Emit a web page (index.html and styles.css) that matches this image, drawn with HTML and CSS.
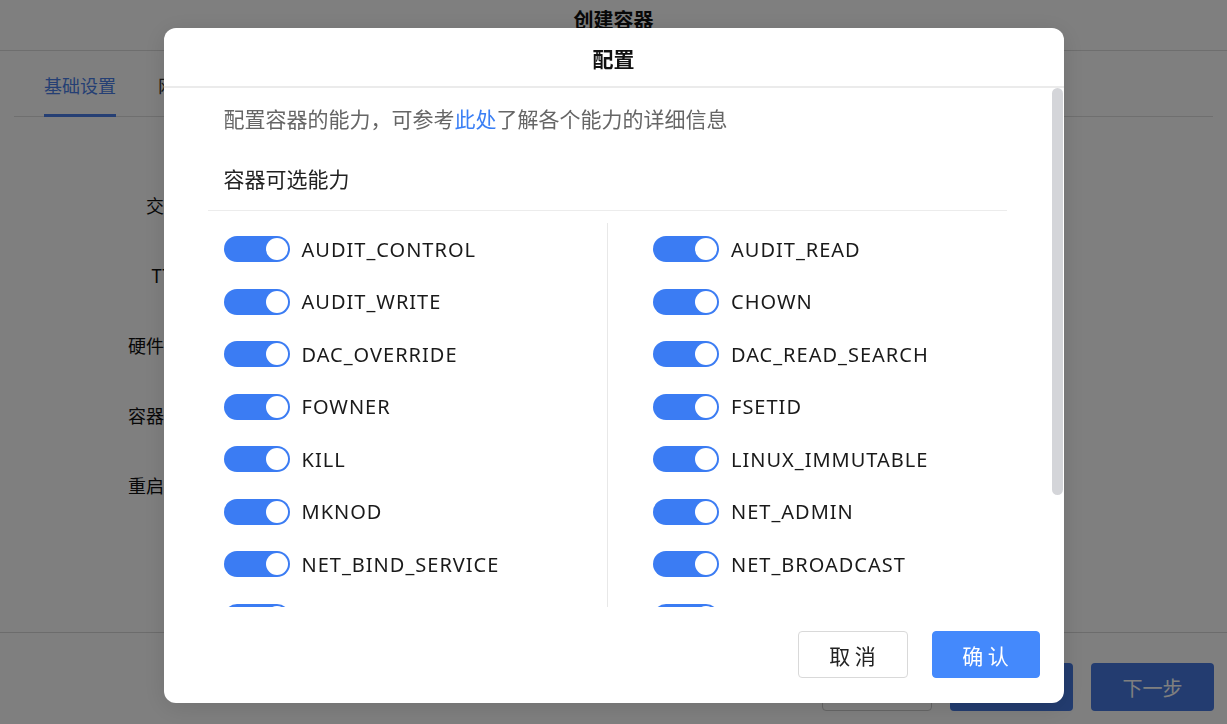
FILE: index.html
```html
<!DOCTYPE html>
<html lang="zh-CN">
<head>
<meta charset="utf-8">
<title>创建容器</title>
<link rel="stylesheet" href="styles.css">
</head>
<body>
<div class="page">
  <header class="page-head">创建容器</header>
  <nav class="tabs">
    <span class="tab active">基础设置</span>
    <span class="tab">网络设置</span>
    <span class="tab">存储设置</span>
  </nav>
  <div class="form">
    <div class="form-row"><span class="form-label">交互式</span></div>
    <div class="form-row"><span class="form-label">TTY：</span></div>
    <div class="form-row"><span class="form-label">硬件限制</span></div>
    <div class="form-row"><span class="form-label">容器能力</span></div>
    <div class="form-row"><span class="form-label">重启策略</span></div>
  </div>
  <footer class="page-foot">
    <button class="pbtn pbtn-outline">取消</button>
    <button class="pbtn pbtn-primary">上一步</button>
    <button class="pbtn pbtn-primary">下一步</button>
  </footer>
</div>

<div class="mask">
  <div class="modal">
    <div class="modal-head">配置</div>
    <div class="modal-body">
      <div class="body-inner">
        <p class="desc">配置容器的能力，可参考<a class="link">此处</a>了解各个能力的详细信息</p>
        <div class="section-title">容器可选能力</div>
        <div class="caps">
          <div class="cap-col left">
            <div class="cap"><span class="switch"><i class="knob"></i></span><span class="cap-name">AUDIT_CONTROL</span></div>
            <div class="cap"><span class="switch"><i class="knob"></i></span><span class="cap-name">AUDIT_WRITE</span></div>
            <div class="cap"><span class="switch"><i class="knob"></i></span><span class="cap-name">DAC_OVERRIDE</span></div>
            <div class="cap"><span class="switch"><i class="knob"></i></span><span class="cap-name">FOWNER</span></div>
            <div class="cap"><span class="switch"><i class="knob"></i></span><span class="cap-name">KILL</span></div>
            <div class="cap"><span class="switch"><i class="knob"></i></span><span class="cap-name">MKNOD</span></div>
            <div class="cap"><span class="switch"><i class="knob"></i></span><span class="cap-name">NET_BIND_SERVICE</span></div>
            <div class="cap"><span class="switch"><i class="knob"></i></span><span class="cap-name">NET_RAW</span></div>
            <div class="cap"><span class="switch"><i class="knob"></i></span><span class="cap-name">SETGID</span></div>
          </div>
          <div class="cap-col right">
            <div class="cap"><span class="switch"><i class="knob"></i></span><span class="cap-name">AUDIT_READ</span></div>
            <div class="cap"><span class="switch"><i class="knob"></i></span><span class="cap-name">CHOWN</span></div>
            <div class="cap"><span class="switch"><i class="knob"></i></span><span class="cap-name">DAC_READ_SEARCH</span></div>
            <div class="cap"><span class="switch"><i class="knob"></i></span><span class="cap-name">FSETID</span></div>
            <div class="cap"><span class="switch"><i class="knob"></i></span><span class="cap-name">LINUX_IMMUTABLE</span></div>
            <div class="cap"><span class="switch"><i class="knob"></i></span><span class="cap-name">NET_ADMIN</span></div>
            <div class="cap"><span class="switch"><i class="knob"></i></span><span class="cap-name">NET_BROADCAST</span></div>
            <div class="cap"><span class="switch"><i class="knob"></i></span><span class="cap-name">SETFCAP</span></div>
            <div class="cap"><span class="switch"><i class="knob"></i></span><span class="cap-name">SETPCAP</span></div>
          </div>
        </div>
      </div>
      <div class="scroll-thumb"></div>
    </div>
    <div class="modal-foot">
      <button class="btn btn-cancel">取 消</button>
      <button class="btn btn-ok">确 认</button>
    </div>
  </div>
</div>
</body>
</html>
```

FILE: styles.css
```css
* { box-sizing: border-box; }
html, body { margin: 0; padding: 0; }
body {
  width: 1227px;
  height: 724px;
  overflow: hidden;
  font-family: "Noto Sans", "Noto Sans CJK SC", sans-serif;
  background: #fff;
  color: #222;
}

/* background page */
.page {
  height: 724px;
  display: flex;
  flex-direction: column;
  background: #fff;
}
.page-head {
  height: 51px;
  border-bottom: 1px solid #dcdcdc;
  display: flex;
  align-items: center;
  justify-content: center;
  font-family: "Noto Sans CJK SC", sans-serif;
  font-weight: 700;
  font-size: 20px;
  color: #111;
  padding-bottom: 12px;
}
.tabs {
  margin: 0 14px;
  height: 66px;
  border-bottom: 1px solid #dedede;
  display: flex;
  gap: 42px;
  padding-left: 30px;
}
.tab {
  font-family: "Noto Sans CJK SC", sans-serif;
  font-size: 18px;
  line-height: 26px;
  padding-top: 21px;
  color: #333;
  border-bottom: 3px solid transparent;
  height: 66px;
}
.tab.active {
  color: #4a7ee8;
  border-bottom-color: #4a7ee8;
}
.form {
  flex: 1;
  padding-top: 53px;
}
.form-row {
  height: 70px;
  display: flex;
  align-items: center;
}
.form-label {
  width: 200px;
  text-align: right;
  font-family: "Noto Sans CJK SC", sans-serif;
  font-size: 18px;
  color: #111;
}
.page-foot {
  height: 92px;
  border-top: 1px solid #d8d8d8;
  display: flex;
  justify-content: flex-end;
  align-items: flex-start;
  gap: 18px;
  padding: 30px 13px 0 0;
}
.pbtn {
  width: 123px;
  height: 48px;
  border-radius: 4px;
  font-family: "Noto Sans CJK SC", sans-serif;
  font-size: 20px;
  border: 1px solid transparent;
}
.pbtn-outline {
  width: 110px;
  height: 46px;
  margin-top: 2px;
  background: #fff;
  border-color: #ccc;
  color: #333;
}
.pbtn-primary {
  background: #4679e0;
  color: #fff;
}

/* overlay */
.mask {
  position: fixed;
  inset: 0;
  background: rgba(0, 0, 0, 0.5);
  display: flex;
  justify-content: center;
  align-items: flex-start;
  padding-top: 28px;
}
.modal {
  width: 900px;
  height: 675px;
  background: #fff;
  border-radius: 12px;
  display: flex;
  flex-direction: column;
  overflow: hidden;
  box-shadow: 0 4px 24px rgba(0, 0, 0, 0.12);
}
.modal-head {
  height: 60px;
  border-bottom: 2px solid #ebebeb;
  display: flex;
  align-items: center;
  justify-content: center;
  padding-top: 2px;
  font-family: "Noto Sans CJK SC", sans-serif;
  font-weight: 700;
  font-size: 21px;
  color: #111;
}
.modal-body {
  flex: 1;
  position: relative;
  overflow: hidden;
}
.body-inner {
  padding: 17px 57px 0 44px;
}
.desc {
  margin: 0;
  padding-left: 16px;
  font-family: "Noto Sans CJK SC", sans-serif;
  font-size: 21px;
  line-height: 26px;
  color: #666;
}
.link {
  color: #3a7ff5;
  text-decoration: none;
}
.section-title {
  margin-top: 34px;
  padding: 0 0 19px 16px;
  font-family: "Noto Sans CJK SC", sans-serif;
  font-size: 21px;
  line-height: 26px;
  color: #222;
  border-bottom: 1px solid #ececec;
}
.caps {
  margin-top: 12px;
  display: grid;
  grid-template-columns: 1fr 1fr;
}
.cap-col.left {
  padding-left: 16px;
}
.cap-col.right {
  border-left: 1px solid #e8e8e8;
  padding-left: 45px;
}
.cap {
  height: 52.5px;
  display: flex;
  align-items: center;
}
.switch {
  width: 66px;
  height: 26px;
  border-radius: 13px;
  background: #3b7cf3;
  display: flex;
  align-items: center;
  justify-content: flex-end;
  padding-right: 2px;
  flex-shrink: 0;
}
.knob {
  width: 22px;
  height: 22px;
  border-radius: 50%;
  background: #fff;
}
.cap-name {
  margin-left: 12px;
  font-family: "Noto Sans", sans-serif;
  font-size: 20px;
  letter-spacing: 1px;
  color: #1a1a1a;
}
.scroll-thumb {
  position: absolute;
  top: 0;
  right: 1px;
  width: 11px;
  height: 407px;
  border-radius: 6px;
  background: #d4d5d9;
}
.modal-foot {
  height: 96px;
  display: flex;
  justify-content: flex-end;
  align-items: flex-start;
  gap: 24px;
  padding: 24px 24px 0 0;
}
.btn {
  height: 47px;
  border-radius: 4px;
  font-family: "Noto Sans CJK SC", sans-serif;
  font-size: 21px;
  cursor: pointer;
}
.btn-cancel {
  width: 110px;
  background: #fff;
  border: 1px solid #d9d9d9;
  color: #222;
}
.btn-ok {
  width: 108px;
  background: #4489fc;
  border: 1px solid #4489fc;
  color: #fff;
}
```
